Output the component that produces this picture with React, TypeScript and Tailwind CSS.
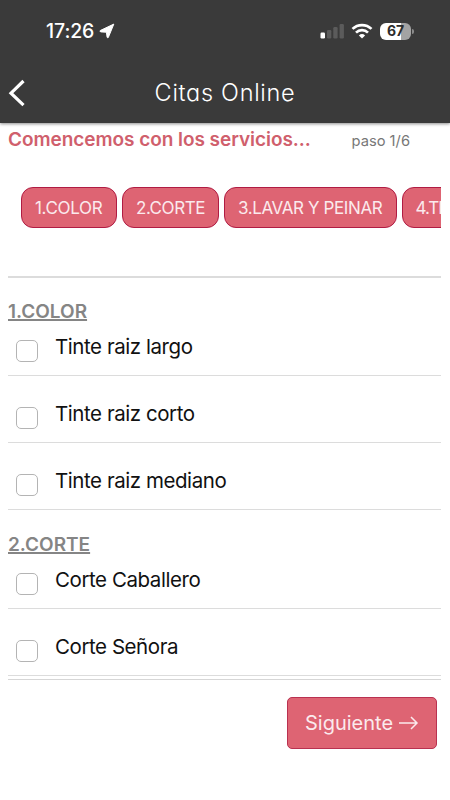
import * as React from 'react';

interface Section {
  title: string;
  services: string[];
}

const categories = [
  { label: '1.COLOR', width: 'w-[96px] pl-[13px] tracking-[-0.3px]' },
  { label: '2.CORTE', width: 'w-[97px] pl-[13px] tracking-[-0.45px]' },
  { label: '3.LAVAR Y PEINAR', width: 'w-[173px] pl-[13px] tracking-[-0.4px]' },
  { label: '4.TI', width: 'w-[96px] pl-[12.5px] tracking-[-1px]' }
];

const sections: Section[] = [
  { title: '1.COLOR', services: ['Tinte raiz largo', 'Tinte raiz corto', 'Tinte raiz mediano'] },
  { title: '2.CORTE', services: ['Corte Caballero', 'Corte Señora'] }
];

function StatusBar() {
  return (
    <div className="flex h-[62px] items-center pl-[46px] pr-[36px] text-white">
      <span className="w-[49px] text-[19.5px] leading-6 font-medium tracking-[-0.1px]">17:26</span>
      <svg className="ml-1 h-4 w-4" viewBox="0 0 16 16" fill="currentColor" stroke="currentColor" strokeWidth="1" strokeLinejoin="round">
        <path d="M14.8 1.1L9.4 14.3Q8.8 15.6 8.1 14.3L7.4 9.2L2 8.9Q.2 8.500 1.300 7.500Z" />
      </svg>
      <div className="ml-auto flex items-center">
        <svg className="h-4 w-6" viewBox="0 0 24 16" fill="currentColor">
          <rect x="0.5" y="9.5" width="4.5" height="6" rx="1.2" />
          <rect x="7" y="7" width="4.3" height="8.5" rx="1.2" opacity="0.17" />
          <rect x="13.3" y="4" width="4.3" height="11.5" rx="1.2" opacity="0.17" />
          <rect x="19.6" y="1" width="4.3" height="14.5" rx="1.2" opacity="0.17" />
        </svg>
        <svg className="ml-[7px] h-4 w-[22px]" viewBox="0 0 22 16" fill="none" stroke="currentColor" strokeWidth="2.7">
          <path d="M1.5 5.900a13.600 13.600 0 0 1 19 0" />
          <path d="M5 9.600a8.600 8.600 0 0 1 12 0" />
          <path d="M11 15.600l-3.100-3.200a4.500 4.500 0 0 1 6.200 0z" fill="currentColor" stroke="none" />
        </svg>
        <div className="ml-[7px] flex h-[17px] w-[31px] items-center justify-center rounded-[6px] bg-linear-to-r from-white from-67% to-[#a3a3a3] to-67%">
          <span className="text-[14px] leading-none font-bold text-[#2c2c2c]">67</span>
        </div>
        <div className="ml-px h-[5px] w-[2px] rounded-r-full bg-[#8b8b8b]" />
      </div>
    </div>
  );
}

function Header() {
  return (
    <header className="h-[123px] bg-[#3a3a3a] shadow-[0_1px_3px_rgba(0,0,0,0.45)]">
      <StatusBar />
      <div className="grid h-[61px] grid-cols-[60px_1fr_60px] items-center text-white">
        <svg className="ml-2 h-7 w-[18px]" viewBox="0 0 18 28" fill="none" stroke="currentColor" strokeWidth="3.2">
          <path d="M15.5 2L3 14.2l12.500 12" />
        </svg>
        <h1 className="text-center text-[23.5px] font-light tracking-[0.7px] [font-feature-settings:'cv11']">Citas Online</h1>
      </div>
    </header>
  );
}

function ServiceRow({ name, first }: { name: string; first: boolean }) {
  const [checked, setChecked] = React.useState(false);

  return (
    <label className={`flex items-end border-b border-[#dcdcdc] ${first ? 'h-[52px]' : 'h-[67px]'}`}>
      <input
        type="checkbox"
        checked={checked}
        onChange={() => setChecked(!checked)}
        className="mb-[13px] ml-2 h-[22px] w-[22px] appearance-none rounded-[5px] border border-[#b4b4b4] bg-white checked:bg-[#de6473]"
      />
      <span className="mb-[14px] ml-[17px] text-[20.5px] leading-7 tracking-[-0.44px] text-[#111]">{name}</span>
    </label>
  );
}

export default function App() {
  return (
    <div className="flex h-[800px] w-[450px] flex-col overflow-hidden bg-white font-['Inter',sans-serif]">
      <Header />
      <main className="px-2">
        <div className="flex h-[34px] items-center">
          <h2 className="text-[19px] font-semibold tracking-[-0.05px] text-[#d05f6d]">Comencemos con los servicios...</h2>
          <span className="mt-[3px] mr-[32px] ml-auto text-[14.7px] text-[#777]">paso 1/6</span>
        </div>
        <nav className="mr-px flex h-[121px] gap-[5px] overflow-hidden border-b-2 border-[#dcdcdc] pt-[30px]  pl-[13px]">
          {categories.map(({ label, width }) => (
            <button
              key={label}
              className={`h-[41px] shrink-0 rounded-[12px] border border-[#b01c43] bg-[#de6473] pt-[2px] text-left text-[17px] whitespace-nowrap text-[#fbeaed] ${width}`}
            >
              {label}
            </button>
          ))}
        </nav>
        <div className="mr-px border-b border-[#d6d6d6] pb-[3px]">
          {sections.map((section, idx) => (
            <section key={section.title} className={idx === 0 ? 'pt-[22px]' : 'pt-[23px]'}>
              <h3 className="h-6 text-[19px] leading-6 font-semibold text-[#858585] underline decoration-[1.5px] underline-offset-1">
                {section.title}
              </h3>
              {section.services.map((name, i) => (
                <ServiceRow key={name} name={name} first={i === 0} />
              ))}
            </section>
          ))}
        </div>
        <div className="flex justify-end pt-[17px] pr-[5px]">
          <button className="flex h-[52px] w-[150px] items-center gap-[6px] rounded-[5px] border border-[#b93150] bg-[#de6473] pl-[17px] text-[20px] text-[#fbeaed]">
            Siguiente
            <svg className="h-4 w-5" viewBox="0 0 20 16" fill="none" stroke="currentColor" strokeWidth="1.5">
              <path d="M0 8h18M12 2L18 8 12 14" />
            </svg>
          </button>
        </div>
      </main>
    </div>
  );
}
